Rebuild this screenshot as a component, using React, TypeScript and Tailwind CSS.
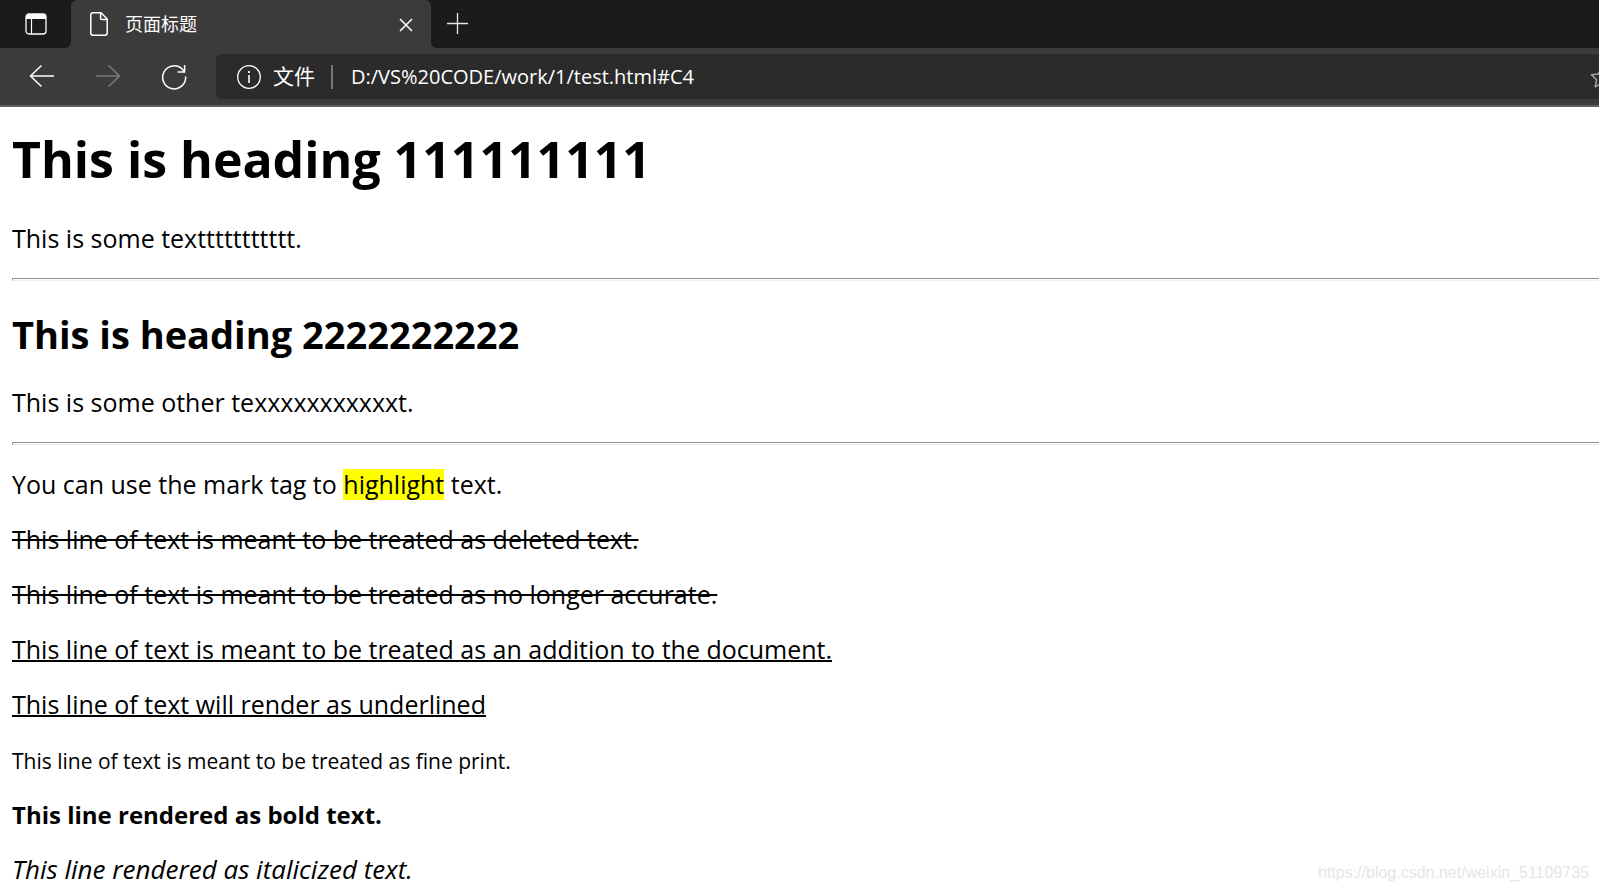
import React from "react";

function ChromeButton({
  label,
  className = "",
  disabled = false,
  children,
}: {
  label: string;
  className?: string;
  disabled?: boolean;
  children: React.ReactNode;
}) {
  return (
    <button
      type="button"
      aria-label={label}
      disabled={disabled}
      className={`flex shrink-0 items-center justify-center ${className}`}
    >
      {children}
    </button>
  );
}

function TitleBar() {
  return (
    <div className="flex h-12 bg-linear-to-b from-[#1b1b1b] from-50% to-[#3b3b3b] to-50% text-white">
      <ChromeButton label="Tab actions" className="w-[71px] rounded-br-md bg-[#1b1b1b]">
        <svg width="22" height="22" viewBox="0 0 22 22" fill="none">
          <rect x="1" y="1" width="20" height="20" rx="3" stroke="#fff" strokeWidth="1.3" />
          <path d="M1 6V4a3 3 0 0 1 3-3h14a3 3 0 0 1 3 3v2z" fill="#fff" />
          <path d="M6.5 6v15" stroke="#fff" strokeWidth="1.2" />
        </svg>
      </ChromeButton>
      <div className="flex w-[360px] items-center rounded-t-md bg-[#3b3b3b] pr-[15px] pl-[19px]">
        <svg width="18" height="24" viewBox="0 0 18 24" fill="none" stroke="#fff" strokeWidth="1.500">
          <path d="M3 .8h8L17.2 7v14a2.2 2.2 0 0 1-2.2 2.2H3A2.2 2.2 0 0 1 .8 21V3A2.2 2.2 0 0 1 3 .8z" />
          <path d="M10.600 .8v5.400a1.200 1.200 0 0 0 1.200 1.200h5.400" />
        </svg>
        <span className="ml-[17px] grow text-lg">页面标题</span>
        <ChromeButton label="Close tab" className="size-5 pt-px">
          <svg width="14" height="14" viewBox="0 0 14 14" stroke="#fff" strokeWidth="1.5">
            <path d="M1 1l12 12M13 1L1 13" />
          </svg>
        </ChromeButton>
      </div>
      <div className="flex grow rounded-bl-md bg-[#1b1b1b]">
        <ChromeButton label="New tab" className="w-[52px] pb-px">
          <svg width="21" height="21" viewBox="0 0 21 21" stroke="#e8e8e8" strokeWidth="1.300">
            <path d="M10.500 0v21M0 10.500h21" />
          </svg>
        </ChromeButton>
      </div>
    </div>
  );
}

function Toolbar() {
  return (
    <div className="flex items-center border-b-2 border-[#5f5f5f] bg-[#3b3b3b] pt-1.5 pb-1.5 pl-[29px] text-white">
      <ChromeButton label="Back" className="size-[26px] pb-0.5">
        <svg width="26" height="24" viewBox="0 0 26 24" fill="none" stroke="#fff" strokeWidth="1.5">
          <path d="M25 12H1.500M12.500 1.500L1.500 12l11 10.500" />
        </svg>
      </ChromeButton>
      <ChromeButton label="Forward" disabled className="ml-10 size-[26px] pb-0.5">
        <svg width="26" height="24" viewBox="0 0 26 24" fill="none" stroke="#7c7c7c" strokeWidth="1.5">
          <path d="M1 12h23.500M13.500 1.500l11 10.500-11 10.500" />
        </svg>
      </ChromeButton>
      <ChromeButton label="Refresh" className="ml-10 size-[26px]">
        <svg width="26" height="26" viewBox="0 0 26 26" fill="none" stroke="#fff" strokeWidth="1.5">
          <path d="M24.600 12.500A11.500 11.500 0 1 1 21.800 5.800L23.500 7.800" />
          <path d="M23.600 1v7h-7" />
        </svg>
      </ChromeButton>
      <div className="ml-[29px] flex h-[45px] grow items-center overflow-hidden rounded-l-md bg-[#2b2b2b] pl-[21px] text-xl">
        <svg className="shrink-0" width="24" height="24" viewBox="0 0 24 24" fill="none" stroke="#fff">
          <circle cx="12" cy="12" r="11.300" strokeWidth="1.3" />
          <path d="M12 10v8" strokeWidth="1.6" />
          <path d="M12 6v2" strokeWidth="1.8" />
        </svg>
        <span className="ml-3 shrink-0 text-[21px]">文件</span>
        <span className="ml-4 h-6 w-0.5 shrink-0 bg-[#777777]" />
        <input
          type="text"
          aria-label="Address"
          defaultValue="D:/VS%20CODE/work/1/test.html#C4"
          className="ml-[18px] min-w-0 grow bg-transparent outline-none"
        />
        <ChromeButton label="Add to favorites" className="-mr-[14px] pt-px">
          <svg width="23" height="23" viewBox="0 0 24 24" fill="none" stroke="#a8a8a8" strokeWidth="1.5" strokeLinejoin="round">
            <path d="M12 1.500l3.200 6.800 7.300.9-5.400 5.100 1.400 7.400-6.500-3.600-6.500 3.600 1.400-7.400L1.500 9.200l7.300-.9z" />
          </svg>
        </ChromeButton>
      </div>
    </div>
  );
}

function Rule() {
  return <hr className="h-[3px] border-t border-b border-l border-t-[#8f8f8f] border-b-[#eeeeee] border-l-[#9a9a9a]" />;
}

export default function App() {
  return (
    <div className="relative min-h-screen overflow-hidden bg-white font-['Open_Sans','Noto_Sans_CJK_SC',sans-serif] text-black">
      <header>
        <TitleBar />
        <Toolbar />
      </header>
      <main className="flex flex-col gap-6 pt-5 pl-3 text-[25px] leading-[31px]">
        <h1 className="mb-2 text-[50px] leading-[64px] font-bold">This is heading 111111111</h1>
        <p>This is some texttttttttttt.</p>
        <Rule />
        <h2 className="mt-[5px] mb-[5px] text-[38px] leading-[48px] font-bold">This is heading 2222222222</h2>
        <p>This is some other texxxxxxxxxxxt.</p>
        <Rule />
        <p>
          You can use the mark tag to <mark className="inline-block bg-[#ffff00]">highlight</mark> text.
        </p>
        <p>
          <del className="decoration-2">This line of text is meant to be treated as deleted text.</del>
        </p>
        <p>
          <s className="decoration-2">This line of text is meant to be treated as no longer accurate.</s>
        </p>
        <p>
          <ins className="decoration-2">This line of text is meant to be treated as an addition to the document.</ins>
        </p>
        <p>
          <u className="decoration-2">This line of text will render as underlined</u>
        </p>
        <p>
          <small className="text-[21px] leading-6">This line of text is meant to be treated as fine print.</small>
        </p>
        <p>
          <strong className="text-2xl leading-6 font-bold">This line rendered as bold text.</strong>
        </p>
        <p>
          <em className="text-[26px] leading-6">This line rendered as italicized text.</em>
        </p>
      </main>
      <a
        href="https://blog.csdn.net/weixin_51109735"
        className="absolute right-2.5 bottom-1.5 font-['Liberation_Sans',sans-serif] text-base text-[#e6e6e6]"
      >
        https://blog.csdn.net/weixin_51109735
      </a>
    </div>
  );
}
